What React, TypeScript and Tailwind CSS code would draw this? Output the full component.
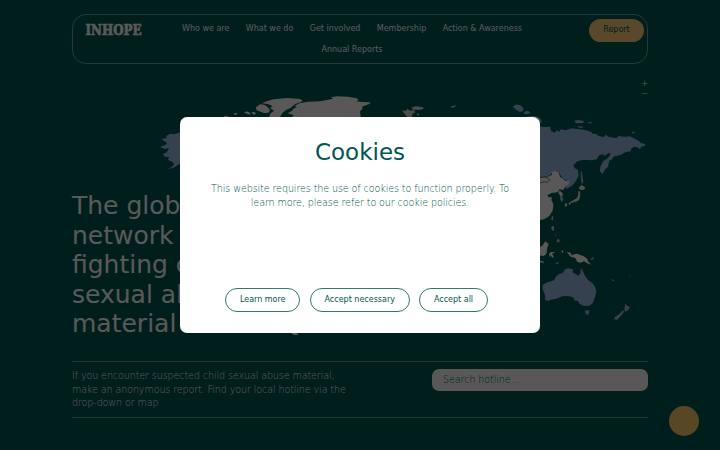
const navItems = [
  "Who we are",
  "What we do",
  "Get involved",
  "Membership",
  "Action & Awareness",
  "Annual Reports",
];

const cookieActions = ["Learn more", "Accept necessary", "Accept all"];

function WorldMap() {
  return (
    <svg
      className="absolute inset-0"
      width="720"
      height="450"
      viewBox="0 0 720 450"
      aria-hidden="true"
    >
      {/* Alaska */}
      <path
        fill="#9ab9e4"
        d="M184 132l-6 1-3 1-5 0-4 2 1 2-6 1 5 3 1 2-7 3 5 2 4-1-2 4-4 2 2 3 4 0-1 3 5 2 1 3-4 3-4 2 9-3 4-3 6-1z"
      />
      {/* Canadian arctic, Greenland and Svalbard */}
      <g fill="#fffafa" transform="translate(140 80) scale(.3333)">
        <path d="M252 108l8-1 6 4-10 3zM281 101l8-3 3 4-7 4zM312 98l8-4 10 4 1 6-8-2zM334 97l10-1 4 6-8 2zM348 82l12-9 12 1 10 6 8 10-4 8-14 1-14-5-9-4z" />
        <path d="M366 70L380 64L400 58L440 54L474 56L488 60L484 66L466 72L452 84L438 90L428 98L418 114L386 114L392 100L402 92L390 84L398 78L382 72z" />
        <path d="M443 100L456 92L460 86L470 82L464 78L478 70L504 65L542 64L560 60L580 56L572 52L590 49L624 50L650 55L656 60L648 64L668 66L690 67L688 72L666 80L668 86L660 94L663 116L450 116L462 106z" />
      </g>
      <g fill="#d8d6d4" transform="translate(370 80) scale(.3333)">
        <path d="M96 92l12 0 4-6 8 6 12-2 4 7-8 4-2 8-2 8-10 0-4-8zM124 83l12-4 22 2 3 6-14 3-18-1zM140 101l6-1 2 6-6 0zM242 80l10-3 9-1-8 5-8 3zM0 71l3-2 0 4z" />
      </g>
      <g fill="#9ab9e4" transform="translate(370 80) scale(.3333)">
        <path d="M428 80l10-6 12 1 10 8 0 9-9 4-12-6zM464 94l12-1 5 7-12 3-8-2zM470 110l16-3 20 4 10 12-6 8-20-12zM612 122l14-2 16 3-2 6-22 1zM652 126l14 1 0 3-10 0zM622 139l14 0 4 4-12 0zM784 156l8-1 4 4-8 1z" />
      </g>
      {/* Russia and east Asia */}
      <g transform="translate(530 110) scale(.3333)">
        <path
          fill="#9ab9e4"
          d="M20 48L42 51L60 50L63 62L74 68L80 61L88 65L92 58L108 61L124 55L150 58L166 60L184 66L188 72L198 71L206 78L222 81L228 74L236 80L260 85L265 78L284 80L300 79L314 86L326 92L332 99L346 102L344 108L334 110L330 118L322 112L312 110L304 116L302 124L286 127L272 135L250 140L246 148L238 152L234 170L226 178L217 192L210 184L211 170L220 154L234 144L242 132L236 128L224 138L218 132L208 136L200 148L184 151L160 149L142 154L130 166L134 174L144 181L146 198L138 212L128 226L110 237L104 224L114 212L98 206L86 186L70 184L60 196L42 202L20 206z"
        />
        <path fill="#9ab9e4" d="M152 180l4 8 4 28-4 6-3-10zM92 252l6 8 2 10-6 6-4-10z" />
        <path
          fill="#fffafa"
          d="M24 205L58 199L66 194L65 186L74 183L86 187L90 200L106 212L118 212L116 222L106 230L100 240L88 238L84 246L74 248L66 248L52 256L56 262L66 262L64 270L70 282L68 302L58 318L42 328L24 331z"
        />
        <path
          fill="none"
          stroke="#005650"
          strokeWidth="2"
          d="M28 202l16-1 10 4 6 4-8 8-10-2-16 5"
        />
        <path fill="#fffafa" d="M88 241l8 7 4 8-9 2-5-8z" />
        <path
          fill="#eee8d8"
          d="M154 225l12 7-4 7-10 1-6-6zM150 243l1 12-4 16-10 4-14 4-4 6-4-5 12-8 14-8 4-10 0-10zM104 281l6-2 2 7-6 6z"
        />
        <path fill="#bdc4c4" d="M66 318l4 2-2 12-5-4zM66 347l5 2-1 10-6-4z" />
      </g>
      {/* Oceania */}
      <g transform="translate(530 220) scale(.3333)">
        <path
          fill="#bdc4c4"
          d="M66 18l6 4 0 12-6-4-2-8zM76 40l3 4-2 4zM83 56l6 3-1 8-8 0z"
        />
        <path
          fill="#fffafa"
          d="M24 84l14-8 8-12 10 8-4 10-2 18-8 8-18-2zM62 96l10 0 2 4-8 0 5 10-4 3-6-8-1 10-3-12zM94 92l6-1-1 8-4-2zM110 96L122 98L124 106L140 101L160 108L172 116L174 124L184 134L172 130L162 124L152 128L142 126L136 114L122 110z"
        />
        <path fill="#fffafa" d="M28 122l12 2 2 4-12-1zM78 129l10-2-8 6z" />
        <path
          fill="#9ab9e4"
          d="M182 116l10-6-2 8-8 2zM245 176l8 6-1 3-6-4zM298 164l3 3-1 5z"
        />
        <path
          fill="#9ab9e4"
          d="M38 195L52 187L72 181L78 170L86 163L98 158L106 148L114 145L130 148L128 157L146 168L151 158L153 143L158 152L164 166L174 180L188 190L196 202L199 215L194 234L188 250L178 257L162 258L148 251L144 242L134 242L130 232L114 228L98 229L78 236L62 239L56 243L45 240L45 225L38 208z"
        />
        <path
          fill="#9ab9e4"
          d="M166 271l12 0-1 10-6 4-5-6zM286 251l6 8 9 1-7 11-8 4-3-6zM279 270l3 6-8 10-12 13-10-1 2-6 14-10z"
        />
      </g>
      {/* tip of South America */}
      <path fill="#fffafa" d="M288 331l6 4 5 0-5-4z" />
    </svg>
  );
}

function Logo() {
  return (
    <svg
      className="mt-px overflow-visible"
      width="60"
      height="22"
      viewBox="0 0 60 22"
    >
      <text
        x="0.5"
        y="16"
        textLength="56"
        lengthAdjust="spacingAndGlyphs"
        fill="white"
        stroke="white"
        strokeWidth="0.6"
        fontFamily="DejaVu Serif, serif"
        fontWeight="700"
        fontSize="14"
      >
        INHOPE
      </text>
    </svg>
  );
}

function Header() {
  return (
    <header className="relative mx-[72px] flex h-[50px] rounded-[14px] border border-white/45 pl-3 pr-[3px] pt-[3px] text-[8px] text-white">
      <Logo />
      <nav className="ml-[24px] flex w-[366px] flex-wrap content-start justify-center gap-x-[16.4px]">
        {navItems.map((item) => (
          <a key={item} className="h-[21.5px] pt-[5.6px] leading-[10px]">
            {item}
          </a>
        ))}
      </nav>
      <button className="ml-auto mt-[0.5px] h-[23px] w-[55px] rounded-full bg-[#ffd078] text-[8px] text-[#005650]">
        Report
      </button>
    </header>
  );
}

function CookieDialog() {
  return (
    <div className="absolute inset-0 flex items-center justify-center bg-black/65">
      <div
        role="dialog"
        className="flex h-[216px] w-[360px] flex-col items-center rounded-[7px] bg-white text-[#005650]"
      >
        <h2 className="mt-[21px] text-[23px] leading-[28px]">Cookies</h2>
        <p className="mt-4 w-[310px] text-center text-[9.6px] font-extralight leading-[13.5px] tracking-[-0.11px]">
          This website requires the use of cookies to function properly. To
          <br />
          learn more, please refer to our cookie policies.
        </p>
        <div className="mb-[21px] mt-auto flex gap-[9.5px] pr-[7px]">
          {cookieActions.map((label) => (
            <button
              key={label}
              className="h-[24.5px] rounded-full border border-[#005650]/80 px-[13.75px] text-[8px]"
            >
              {label}
            </button>
          ))}
        </div>
      </div>
    </div>
  );
}

export default function App() {
  return (
    <div className="relative h-[450px] w-[720px] overflow-hidden bg-[#005650] pt-[14px] font-['DejaVu_Sans',sans-serif]">
      <WorldMap />
      <Header />
      <div className="relative mr-[72px] mt-[15px] flex h-[19px] flex-col items-end text-[8px] leading-[10px] text-white/80">
        <span>+</span>
        <span>−</span>
      </div>
      <main className="relative mx-[72px] mt-[93px]">
        <h1 className="w-[280px] text-[25px] leading-[29.5px] text-white">
          The global
          <br />
          network
          <br />
          fighting child
          <br />
          sexual abuse
          <br />
          material
        </h1>
        <section className="mt-[22px] flex h-[57px] justify-between border-y border-white/45 pt-[7px]">
          <p className="mt-[0.8px] w-[290px] text-[9.6px] font-extralight leading-[13.6px] tracking-[-0.12px] text-white">
            If you encounter suspected child sexual abuse material,
            <br />
            make an anonymous report. Find your local hotline via the
            <br />
            drop-down or map.
          </p>
          <input
            type="text"
            placeholder="Search hotline..."
            className="h-[22px] w-[216px] rounded-[7px] bg-[#fffafa] px-[11px] text-[9.6px] font-extralight tracking-[-0.1px] placeholder:text-[#005650]"
          />
        </section>
      </main>
      <div className="absolute bottom-[14px] right-[21px] size-[30px] rounded-full bg-[#ffc96c]" />
      <CookieDialog />
    </div>
  );
}
